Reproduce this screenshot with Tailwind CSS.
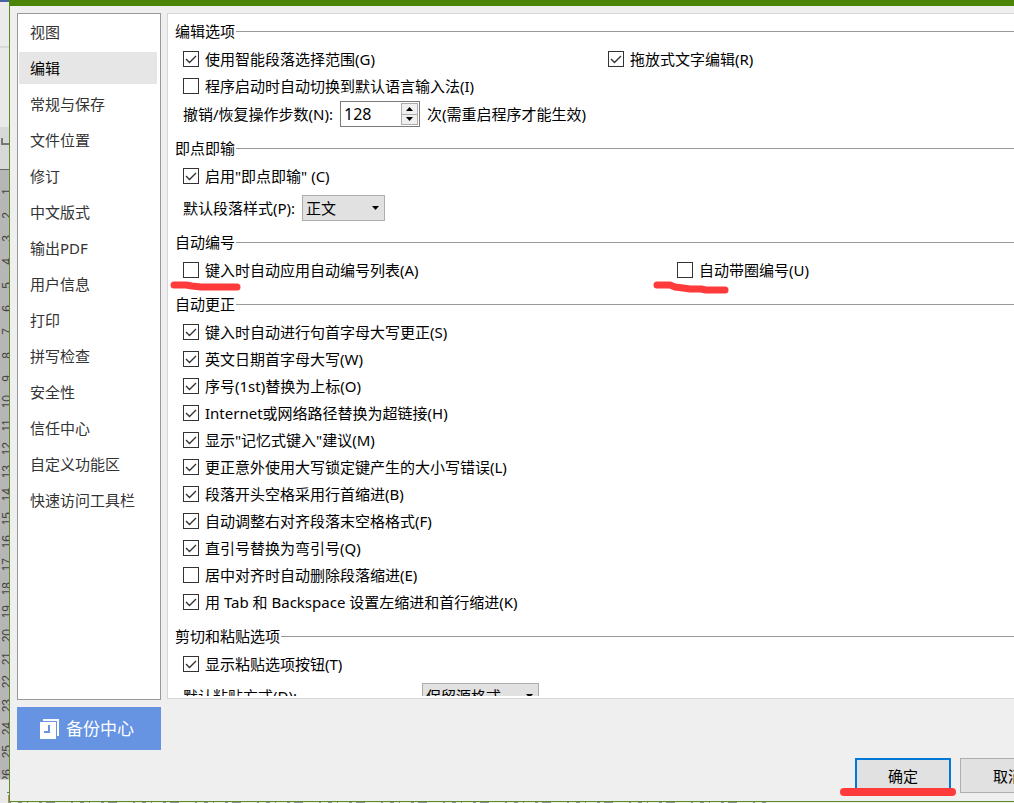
<!DOCTYPE html>
<html lang="zh-CN">
<head>
  <meta charset="UTF-8">
  <meta name="viewport" content="width=device-width, initial-scale=1.0">
  <title>选项</title>
  <script src="https://cdn.jsdelivr.net/npm/@tailwindcss/browser@4"></script>
  <style>
    body, button, input, select {
      font-family: 'Noto Sans', 'Noto Sans CJK SC', sans-serif;
    }
  </style>
</head>
<body class="relative flex h-screen overflow-hidden bg-[#efefef] text-[15px] leading-5 text-black">

  <!-- Document window behind the dialog -->
  <div class="flex w-[9px] shrink-0 flex-col overflow-hidden border-t-2 border-[#4465a2] bg-[#e9e9e9]">
    <div class="h-[46px] shrink-0 border-b-2 border-[#d8d8d8] bg-[#ebebeb]"></div>
    <div class="h-[79px] shrink-0"></div>
    <div class="flex h-[43px] shrink-0 items-start border-b border-[#666] bg-[#d8d8d8] pt-[11px]">
      <div class="ml-px h-[7px] w-2 border-b-2 border-l-2 border-[#777]"></div>
    </div>
    <div id="ruler" class="-mb-2 flex min-h-0 flex-1 flex-col items-start justify-between overflow-hidden bg-[#b6b6b6] pt-[10px] pl-[2px] font-['Liberation_Sans'] text-[12px] leading-[10px] text-[#444]"></div>
    <div class="relative h-6 shrink-0 border-t border-[#ccc] bg-[#e9e9e9] pt-3">
      <div class="ml-[7px] h-px w-2 bg-[#777]"></div>
      <div class="ml-2 mt-[2px] h-2 w-2 bg-[#b98a68]"></div>
    </div>
  </div>

  <div class="flex min-w-0 flex-1 flex-col">
    <!-- Dialog -->
    <div class="flex min-h-0 flex-1 flex-col border-t-[6px] border-b border-l border-t-[#4b8507] border-b-[#5b8c28] border-l-[#5b8c28] pt-[7px] pb-2 pl-[7px]">
      <div class="flex min-h-0 flex-1 gap-[6px]">

        <!-- Sidebar -->
        <div class="flex w-36 shrink-0 flex-col gap-[7px]">
          <nav id="nav" class="flex min-h-0 flex-1 flex-col gap-1 border border-[#999] bg-white pt-[2px] pr-[3px] pl-px"></nav>
          <button class="flex h-[43px] shrink-0 items-center gap-[7px] bg-[#6694e2] pl-[23px] text-[17px] text-white">
            <svg class="h-5 w-[19px]" viewBox="0 0 19 20" fill="none">
              <path d="M3 0H19V17H17V2H3Z" fill="#fff"/>
              <path d="M0 3H16V20H0Z" fill="#fff"/>
              <path d="M9 6V13H4" stroke="#6694e2" stroke-width="2"/>
            </svg>
            备份中心
          </button>
        </div>

        <!-- Options panel -->
        <div class="mb-[51px] min-w-0 flex-1 border-t border-b border-l border-[#d6d6d6] bg-white pt-[3px] pb-[2px] pl-[7px]">
          <div class="h-full overflow-hidden">
            <section class="pb-[5px]">
              <h2 class="flex h-7 items-center gap-px">编辑选项<span class="h-px flex-1 bg-[#999]"></span></h2>
              <div class="flex pl-2">
                <div class="w-[425px] shrink-0" data-options="smart"></div>
                <div data-options="drag"></div>
              </div>
              <div class="pl-2" data-options="ime"></div>
              <div class="flex h-[30px] items-center gap-[7px] pl-2 whitespace-nowrap">
                <label for="undo">撤销/恢复操作步数(N):</label>
                <div class="flex h-[26px] w-20 border border-[#7a7a7a] bg-white p-px">
                  <input id="undo" type="text" value="128" class="w-0 min-w-0 flex-1 pl-[2px] text-base outline-none">
                  <div class="flex w-[17px] flex-col">
                    <button id="undoUp" aria-label="增加" class="flex flex-1 items-center justify-center border border-[#acacac] bg-[#f0f0f0]">
                      <svg class="h-1 w-[7px]" viewBox="0 0 7 4"><path d="M0 4L3.5 0L7 4Z"/></svg>
                    </button>
                    <button id="undoDown" aria-label="减少" class="flex flex-1 items-center justify-center border border-t-0 border-[#acacac] bg-[#f0f0f0]">
                      <svg class="h-1 w-[7px]" viewBox="0 0 7 4"><path d="M0 0L3.5 4L7 0Z"/></svg>
                    </button>
                  </div>
                </div>
                <span>次(需重启程序才能生效)</span>
              </div>
            </section>

            <section class="pb-px">
              <h2 class="flex h-7 items-center gap-px">即点即输<span class="h-px flex-1 bg-[#999]"></span></h2>
              <div class="pl-2" data-options="click"></div>
              <div class="flex h-[38px] items-center gap-[7px] pl-2">
                <label for="style">默认段落样式(P):</label>
                <div class="relative">
                  <select id="style" class="h-[26px] w-[83px] appearance-none border border-[#adadad] bg-[#e1e1e1] pl-[3px]">
                    <option>正文</option>
                  </select>
                  <svg class="pointer-events-none absolute top-[11px] right-[6px] h-1 w-[7px]" viewBox="0 0 7 4"><path d="M0 0L3.5 4L7 0Z"/></svg>
                </div>
              </div>
            </section>

            <section class="pb-[7px]">
              <h2 class="flex h-7 items-center gap-px">自动编号<span class="h-px flex-1 bg-[#999]"></span></h2>
              <div class="flex pl-2">
                <div class="w-[494px] shrink-0" data-options="list"></div>
                <div data-options="circle"></div>
              </div>
            </section>

            <section class="pb-[7px]">
              <h2 class="flex h-7 items-center gap-px">自动更正<span class="h-px flex-1 bg-[#999]"></span></h2>
              <div class="pl-2" data-options="correct"></div>
            </section>

            <section>
              <h2 class="flex h-7 items-center gap-px">剪切和粘贴选项<span class="h-px flex-1 bg-[#999]"></span></h2>
              <div class="pl-2" data-options="paste"></div>
              <div class="flex h-[38px] items-center pl-2">
                <label for="pasteMode" class="w-[239px] shrink-0">默认粘贴方式(D):</label>
                <div class="relative">
                  <select id="pasteMode" class="h-[26px] w-[117px] appearance-none border border-[#adadad] bg-[#e1e1e1] pl-[3px]">
                    <option>保留源格式</option>
                  </select>
                  <svg class="pointer-events-none absolute top-[11px] right-[6px] h-1 w-[7px]" viewBox="0 0 7 4"><path d="M0 0L3.5 4L7 0Z"/></svg>
                </div>
              </div>
            </section>
          </div>
        </div>
      </div>

      <!-- Footer, runs past the right edge of the window -->
      <div class="mt-2 -mr-[42px] flex h-[35px] shrink-0 justify-end gap-[9px]">
        <button class="w-24 border-2 border-[#0078d7] bg-[#e1e1e1]">确定</button>
        <button class="w-24 border border-[#adadad] bg-[#e1e1e1]">取消</button>
      </div>
    </div>

    <!-- Sliver of the page text under the dialog -->
    <svg class="h-px w-full shrink-0 bg-[#e8efe4]" preserveAspectRatio="none">
      <path d="M0 0.5H760" stroke="#8b929a" stroke-dasharray="2 7 4 5 1 11 3 4 9 16"/>
    </svg>
  </div>

  <!-- Red marker strokes -->
  <svg class="pointer-events-none absolute top-0 left-0 h-full w-full" fill="none" stroke="#fe3a3a" stroke-width="7" stroke-linecap="round" stroke-linejoin="round">
    <path d="M174 285H186L192 286L201 287H237"/>
    <path d="M657 285H670L675 287L683 288L690 289H701L706 290H725"/>
    <path d="M844 792H952" stroke-width="8"/>
  </svg>

  <script>
    const navItems = ['视图', '编辑', '常规与保存', '文件位置', '修订', '中文版式', '输出PDF', '用户信息', '打印', '拼写检查', '安全性', '信任中心', '自定义功能区', '快速访问工具栏'];

    const options = {
      smart: [['使用智能段落选择范围(G)', true]],
      drag: [['拖放式文字编辑(R)', true]],
      ime: [['程序启动时自动切换到默认语言输入法(I)', false]],
      click: [['启用"即点即输" (C)', true]],
      list: [['键入时自动应用自动编号列表(A)', false]],
      circle: [['自动带圈编号(U)', false]],
      correct: [
        ['键入时自动进行句首字母大写更正(S)', true],
        ['英文日期首字母大写(W)', true],
        ['序号(1st)替换为上标(O)', true],
        ['Internet或网络路径替换为超链接(H)', true],
        ['显示"记忆式键入"建议(M)', true],
        ['更正意外使用大写锁定键产生的大小写错误(L)', true],
        ['段落开头空格采用行首缩进(B)', true],
        ['自动调整右对齐段落末空格格式(F)', true],
        ['直引号替换为弯引号(Q)', true],
        ['居中对齐时自动删除段落缩进(E)', false],
        ['用 Tab 和 Backspace 设置左缩进和首行缩进(K)', true]
      ],
      paste: [['显示粘贴选项按钮(T)', true]]
    };

    document.getElementById('nav').innerHTML = navItems.map(item => {
      const state = item === '编辑' ? 'bg-[#e6e6e6] text-black' : 'text-[#333]';
      return `<a href="#" class="flex h-8 shrink-0 items-center pl-[11px] ${state}">${item}</a>`;
    }).join('');

    document.querySelectorAll('[data-options]').forEach(box => {
      const key = box.dataset.options;
      box.innerHTML = options[key].map(([text, checked], i) => `
        <div class="flex h-[27px] items-center gap-[6px] whitespace-nowrap">
          <span class="relative size-4">
            <input type="checkbox" id="${key}${i}" class="peer block size-4 appearance-none border border-[#333] bg-white" ${checked ? 'checked' : ''}>
            <svg class="pointer-events-none absolute inset-0 hidden size-4 peer-checked:block" viewBox="0 0 16 16" fill="none" stroke="#333" stroke-width="1.4"><path d="M3 8L6.5 11.5L13 5"/></svg>
          </span>
          <label for="${key}${i}">${text}</label>
        </div>`).join('');
    });

    // Vertical ruler numbers, read bottom to top
    const ruler = document.getElementById('ruler');
    for (let n = 1; n <= 26; n++) {
      const mark = document.createElement('div');
      mark.className = 'flex h-6 shrink items-center justify-center';
      mark.innerHTML = `<span class="rotate-180 [writing-mode:vertical-rl]">${n}</span>`;
      ruler.appendChild(mark);
    }

    const undo = document.getElementById('undo');
    document.getElementById('undoUp').onclick = () => { undo.value = Number(undo.value) + 1; };
    document.getElementById('undoDown').onclick = () => { undo.value = Math.max(0, Number(undo.value) - 1); };
  </script>
</body>
</html>
